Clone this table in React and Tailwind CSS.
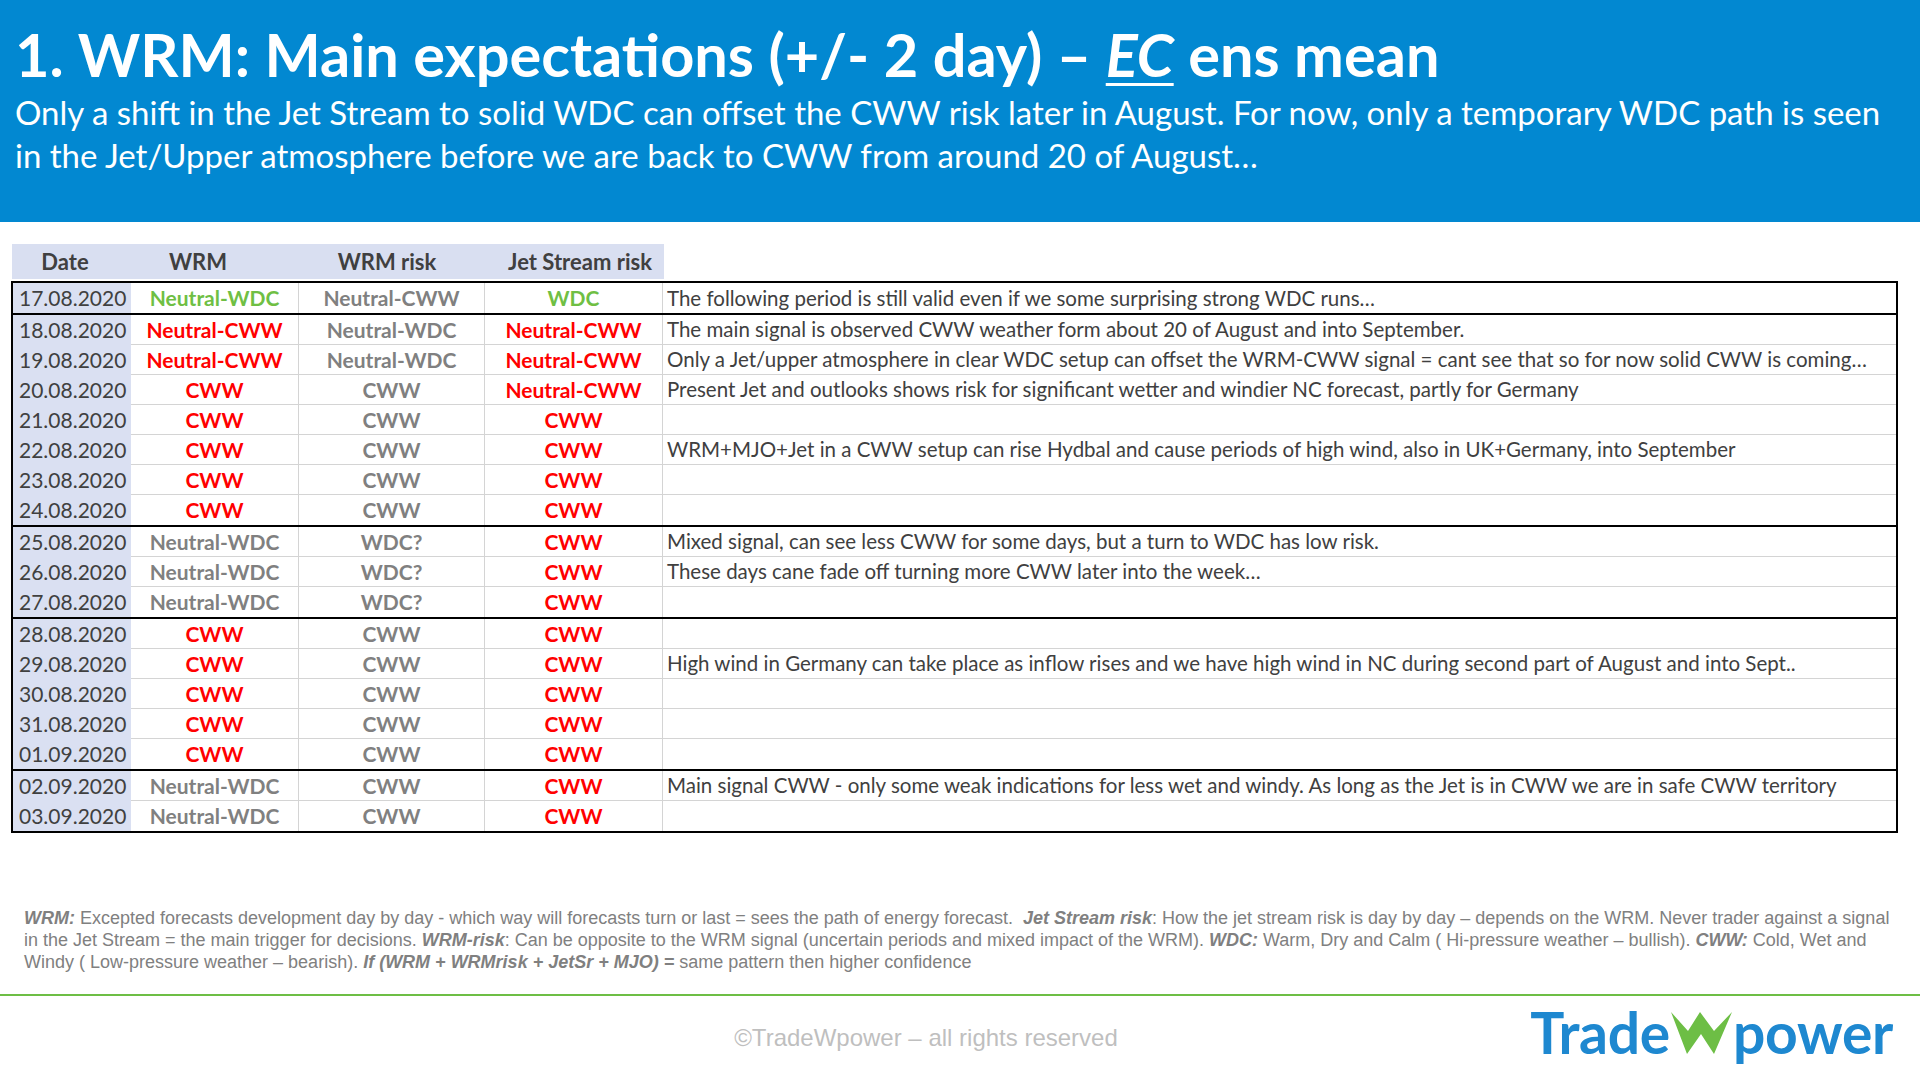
import React from 'react';

const tone = {
  r: 'text-[#ff0000]',
  g: 'text-[#6fbf44]',
  x: 'text-[#808080]',
};

const groups = [
  [
    ['17.08.2020', ['Neutral-WDC', 'g'], ['Neutral-CWW', 'x'], ['WDC', 'g'], 'The following period is still valid even if we some surprising strong WDC runs…'],
  ],
  [
    ['18.08.2020', ['Neutral-CWW', 'r'], ['Neutral-WDC', 'x'], ['Neutral-CWW', 'r'], 'The main signal is observed CWW weather form about 20 of August and into September.'],
    ['19.08.2020', ['Neutral-CWW', 'r'], ['Neutral-WDC', 'x'], ['Neutral-CWW', 'r'], 'Only a Jet/upper atmosphere in clear WDC setup can offset the WRM-CWW signal = cant see that so for now solid CWW is coming…'],
    ['20.08.2020', ['CWW', 'r'], ['CWW', 'x'], ['Neutral-CWW', 'r'], 'Present Jet and outlooks shows risk for significant wetter and windier NC forecast, partly for Germany'],
    ['21.08.2020', ['CWW', 'r'], ['CWW', 'x'], ['CWW', 'r'], ''],
    ['22.08.2020', ['CWW', 'r'], ['CWW', 'x'], ['CWW', 'r'], 'WRM+MJO+Jet in a CWW setup can rise Hydbal and cause periods of high wind, also in UK+Germany, into September'],
    ['23.08.2020', ['CWW', 'r'], ['CWW', 'x'], ['CWW', 'r'], ''],
    ['24.08.2020', ['CWW', 'r'], ['CWW', 'x'], ['CWW', 'r'], ''],
  ],
  [
    ['25.08.2020', ['Neutral-WDC', 'x'], ['WDC?', 'x'], ['CWW', 'r'], 'Mixed signal, can see less CWW for some days, but a turn to WDC has low risk.'],
    ['26.08.2020', ['Neutral-WDC', 'x'], ['WDC?', 'x'], ['CWW', 'r'], 'These days cane fade off turning more CWW later into the week…'],
    ['27.08.2020', ['Neutral-WDC', 'x'], ['WDC?', 'x'], ['CWW', 'r'], ''],
  ],
  [
    ['28.08.2020', ['CWW', 'r'], ['CWW', 'x'], ['CWW', 'r'], ''],
    ['29.08.2020', ['CWW', 'r'], ['CWW', 'x'], ['CWW', 'r'], 'High wind in Germany can take place as inflow rises and we have high wind in NC during second part of August and into Sept..'],
    ['30.08.2020', ['CWW', 'r'], ['CWW', 'x'], ['CWW', 'r'], ''],
    ['31.08.2020', ['CWW', 'r'], ['CWW', 'x'], ['CWW', 'r'], ''],
    ['01.09.2020', ['CWW', 'r'], ['CWW', 'x'], ['CWW', 'r'], ''],
  ],
  [
    ['02.09.2020', ['Neutral-WDC', 'x'], ['CWW', 'x'], ['CWW', 'r'], 'Main signal CWW - only some weak indications for less wet and windy. As long as the Jet is in CWW we are in safe CWW territory'],
    ['03.09.2020', ['Neutral-WDC', 'x'], ['CWW', 'x'], ['CWW', 'r'], ''],
  ],
];

const Row = ({ row, last }) => {
  const [date, wrm, risk, jet, note] = row;
  return (
    <div className="flex h-[30px] items-center">
      <div className="w-[118px] h-full flex items-center pl-[6px] bg-[#dae0f2] text-[#404040]">{date}</div>
      <div className={`flex-1 h-full flex ${last ? '' : 'border-b border-[#d4d4d4]'}`}>
        <div className={`w-[167px] flex items-center justify-center font-bold ${tone[wrm[1]]}`}>{wrm[0]}</div>
        <div className={`w-[186px] flex items-center justify-center font-bold border-l border-[#d4d4d4] ${tone[risk[1]]}`}>{risk[0]}</div>
        <div className={`w-[178px] flex items-center justify-center font-bold border-l border-[#d4d4d4] ${tone[jet[1]]}`}>{jet[0]}</div>
        <div className="flex-1 flex items-center pl-[4px] border-l border-[#d4d4d4] text-[#404040] text-[20.5px] whitespace-nowrap">{note}</div>
      </div>
    </div>
  );
};

// logo: blue word mark with the green W in between
const Logo = () => (
  <div className="flex items-baseline text-[#1e88d0] font-['Lato',sans-serif] font-bold text-[57px] leading-none tracking-[-0.3px]">
    <span>Trade</span>
    <svg width="61" height="42" viewBox="0 0 61 42" className="mx-[1px]">
      <polygon points="0,0 17,19 29,0 43,19 61,0 43,42 30,22 16,42" fill="#6dbe45" />
    </svg>
    <span>power</span>
  </div>
);

export default function App() {
  return (
    <div className="w-[1920px] h-[1080px] bg-white flex flex-col font-['Lato',sans-serif] overflow-hidden">
      <header className="h-[222px] shrink-0 bg-[#0288d1] text-white px-[15px] pt-[22px]">
        <h1 className="text-[59.5px] font-bold leading-[64px]">
          1. WRM: Main expectations (+/- 2 day) – <span className="italic underline decoration-[3px] underline-offset-[6px]">EC</span> ens mean
        </h1>
        <p className="text-[33px] leading-[43px] mt-[5px]">
          Only a shift in the Jet Stream to solid WDC can offset the CWW risk later in August. For now, only a temporary WDC path is seen
          <br />
          in the Jet/Upper atmosphere before we are back to CWW from around 20 of August…
        </p>
      </header>

      <section className="pl-[11px] pr-[22px] mt-[22px] text-[21px]">
        <div className="ml-[1px] w-[652px] h-[35px] flex items-center bg-[#d9dff1] text-[#404040] font-bold text-[22px]">
          <div className="w-[106px] text-center">Date</div>
          <div className="w-[160px] text-center">WRM</div>
          <div className="w-[218px] text-center">WRM risk</div>
          <div className="w-[168px] text-center">Jet Stream risk</div>
        </div>
        <div className="mt-[2px]">
          {groups.map((g, gi) => (
            <div key={gi} className={`border-x-2 border-b-2 border-black ${gi === 0 ? 'border-t-2' : ''}`}>
              {g.map((row, ri) => (
                <Row key={row[0]} row={row} last={ri === g.length - 1} />
              ))}
            </div>
          ))}
        </div>
      </section>

      <div className="mt-[74px] px-[24px] font-['Liberation_Sans',Arial,sans-serif] text-[18px] leading-[22px] text-[#808080]">
        <div className="whitespace-nowrap">
          <b className="italic">WRM:</b> Excepted forecasts development day by day - which way will forecasts turn or last = sees the path of energy forecast.&nbsp; <b className="italic">Jet Stream risk</b>: How the jet stream risk is day by day – depends on the WRM. Never trader against a signal
        </div>
        <div className="whitespace-nowrap">
          in the Jet Stream = the main trigger for decisions. <b className="italic">WRM-risk</b>: Can be opposite to the WRM signal (uncertain periods and mixed impact of the WRM). <b className="italic">WDC:</b> Warm, Dry and Calm ( Hi-pressure weather – bullish). <b className="italic">CWW:</b> Cold, Wet and
        </div>
        <div className="whitespace-nowrap">
          Windy ( Low-pressure weather – bearish). <b className="italic">If (WRM + WRMrisk + JetSr + MJO) =</b> same pattern then higher confidence
        </div>
      </div>

      <div className="mt-[21px] h-[2px] shrink-0 bg-[#6dbe45]" />

      <footer className="flex-1 relative flex items-center">
        <div className="w-[1852px] text-center font-['Liberation_Sans',Arial,sans-serif] text-[24px] text-[#bfbfbf]">
          ©TradeWpower – all rights reserved
        </div>
        <div className="absolute right-[27px] top-[8px]">
          <Logo />
        </div>
      </footer>
    </div>
  );
}
